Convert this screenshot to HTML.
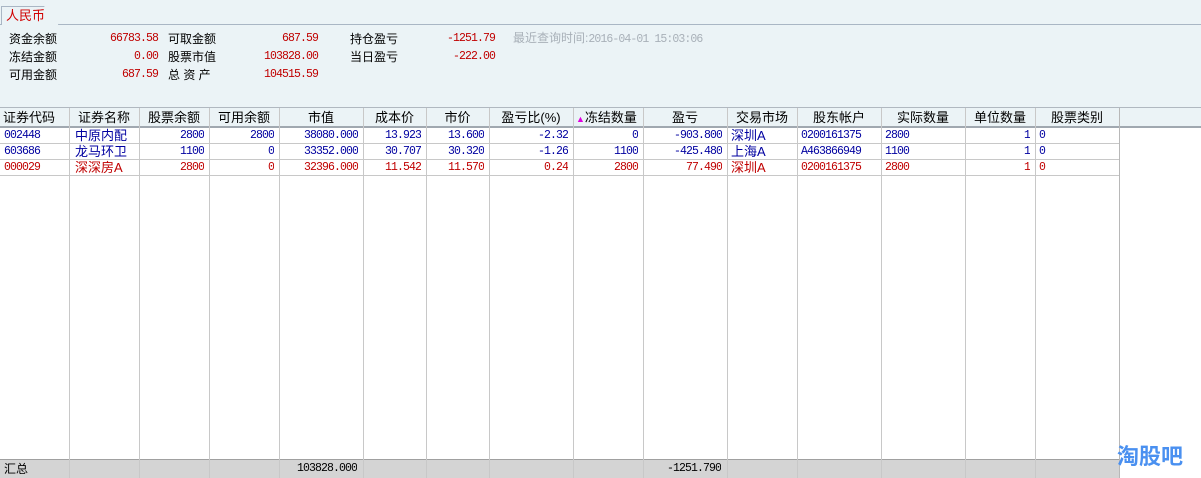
<!DOCTYPE html>
<html><head><meta charset="utf-8"><style>
*{margin:0;padding:0;box-sizing:border-box}
body{width:1201px;height:478px;background:#fff;position:relative;overflow:hidden;font-family:"Liberation Sans","WenQuanYi Zen Hei","Noto Sans CJK SC",sans-serif;font-size:12px;color:#000}
.m{font-family:"Liberation Mono","WenQuanYi Zen Hei",monospace;font-size:11.5px;letter-spacing:-0.9px}
.top{position:absolute;left:0;top:0;width:1201px;height:107px;background:#ebf3f6}
.tabline{position:absolute;left:0;top:24px;width:1201px;height:1px;background:#a9b6c4}
.tab{position:absolute;left:1px;top:6px;width:58px;height:19px;border:1px solid #a9b6c4;border-bottom:none;background:#ebf3f6;color:#d00000;font-size:13px;padding-left:4px;line-height:17px;clip-path:polygon(0 0,43px 0,100% 100%,0 100%)}
.t{position:absolute;white-space:nowrap;line-height:14px}
.r{color:#c00000;text-align:right}
.hdr{position:absolute;left:0;top:107px;width:1201px;height:21px;background:#ebf3f6;border-top:1px solid #b0b8c0;border-bottom:2px solid #a0a8b0}
.c{position:absolute;white-space:nowrap;line-height:16px;overflow:hidden}
.vl{position:absolute;width:1px;background:#c8c8c8}
.hl{position:absolute;height:1px;background:#c8c8c8;left:0;width:1119px}
.b{color:#0000a0}.rd{color:#c00000}
.tot{position:absolute;left:0;top:459px;width:1119px;height:19px;background:#d4d4d4;border-top:1px solid #a0a0a0}
</style></head><body>
<div class="top"></div>
<div class="tabline"></div>
<div class="tab">人民币</div>
<div class="t" style="left:9px;top:32px">资金余额</div>
<div class="t" style="left:9px;top:50px">冻结金额</div>
<div class="t" style="left:9px;top:68px">可用金额</div>
<div class="t r m" style="left:90px;width:68px;top:32px">66783.58</div>
<div class="t r m" style="left:90px;width:68px;top:50px">0.00</div>
<div class="t r m" style="left:90px;width:68px;top:68px">687.59</div>
<div class="t" style="left:168px;top:32px">可取金额</div>
<div class="t" style="left:168px;top:50px">股票市值</div>
<div class="t" style="left:168px;top:68px">总&nbsp;资&nbsp;产</div>
<div class="t r m" style="left:230px;width:88px;top:32px">687.59</div>
<div class="t r m" style="left:230px;width:88px;top:50px">103828.00</div>
<div class="t r m" style="left:230px;width:88px;top:68px">104515.59</div>
<div class="t" style="left:350px;top:32px">持仓盈亏</div>
<div class="t" style="left:350px;top:50px">当日盈亏</div>
<div class="t r m" style="left:420px;width:75px;top:32px">-1251.79</div>
<div class="t r m" style="left:420px;width:75px;top:50px">-222.00</div>
<div class="t" style="left:513px;top:31px;color:#a8b0b8">最近查询时间:<span class="m">2016-04-01 15:03:06</span></div>
<div class="hdr"></div>
<div class="hl" style="top:143px"></div><div class="hl" style="top:159px"></div><div class="hl" style="top:175px"></div>
<div class="tot"></div>
<div id="g"></div>
<div class="t" style="left:1117px;top:444px;font-size:22px;line-height:26px;font-weight:bold;color:#4a90f0">淘股吧</div>
<script>
var x=[0,69,139,209,279,363,426,489,573,643,727,797,881,965,1035,1119];
var h=["证券代码","证券名称","股票余额","可用余额","市值","成本价","市价","盈亏比(%)","<span style='color:#e000e0;font-size:9px'>▲</span>冻结数量","盈亏","交易市场","股东帐户","实际数量","单位数量","股票类别"];
var al=["l","c","c","c","c","c","c","c","l","c","c","c","c","c","c"];
var rows=[
["b","002448","中原内配","2800","2800","38080.000","13.923","13.600","-2.32","0","-903.800","深圳A","0200161375","2800","1","0"],
["b","603686","龙马环卫","1100","0","33352.000","30.707","30.320","-1.26","1100","-425.480","上海A","A463866949","1100","1","0"],
["rd","000029","深深房A","2800","0","32396.000","11.542","11.570","0.24","2800","77.490","深圳A","0200161375","2800","1","0"]];
var ra=["l","l","r","r","r","r","r","r","r","r","l","l","l","r","l"];
var s="";
for(var i=1;i<x.length;i++){s+='<div class="vl" style="left:'+x[i]+'px;top:108px;height:370px;background:'+(i==x.length-1?'#b8b8b8':'#c8c8c8')+'"></div>';}
for(var i=0;i<15;i++){var w=x[i+1]-x[i];s+='<div class="c" style="left:'+(x[i]+3)+'px;width:'+(w-6)+'px;top:109px;line-height:18px;font-size:13px;text-align:'+(al[i]=="c"?"center":"left")+'">'+h[i]+'</div>';}
for(var r=0;r<3;r++){for(var i=0;i<15;i++){var w=x[i+1]-x[i];var v=rows[r][i+1];var cjk=(i==1||i==10);
s+='<div class="c '+rows[r][0]+(cjk?'':' m')+'" style="left:'+(x[i]+(i==1?6:4))+'px;width:'+(w-9)+'px;top:'+(128+r*16)+'px;'+(cjk?'font-size:13px;':'')+'text-align:'+(ra[i]=="r"?"right":"left")+'">'+v+'</div>';}}
s+='<div class="c" style="left:4px;top:460px;line-height:18px">汇总</div>';
s+='<div class="c m" style="left:279px;width:78px;top:460px;line-height:18px;text-align:right">103828.000</div>';
s+='<div class="c m" style="left:643px;width:78px;top:460px;line-height:18px;text-align:right">-1251.790</div>';
document.getElementById("g").innerHTML=s;
</script>
</body></html>
